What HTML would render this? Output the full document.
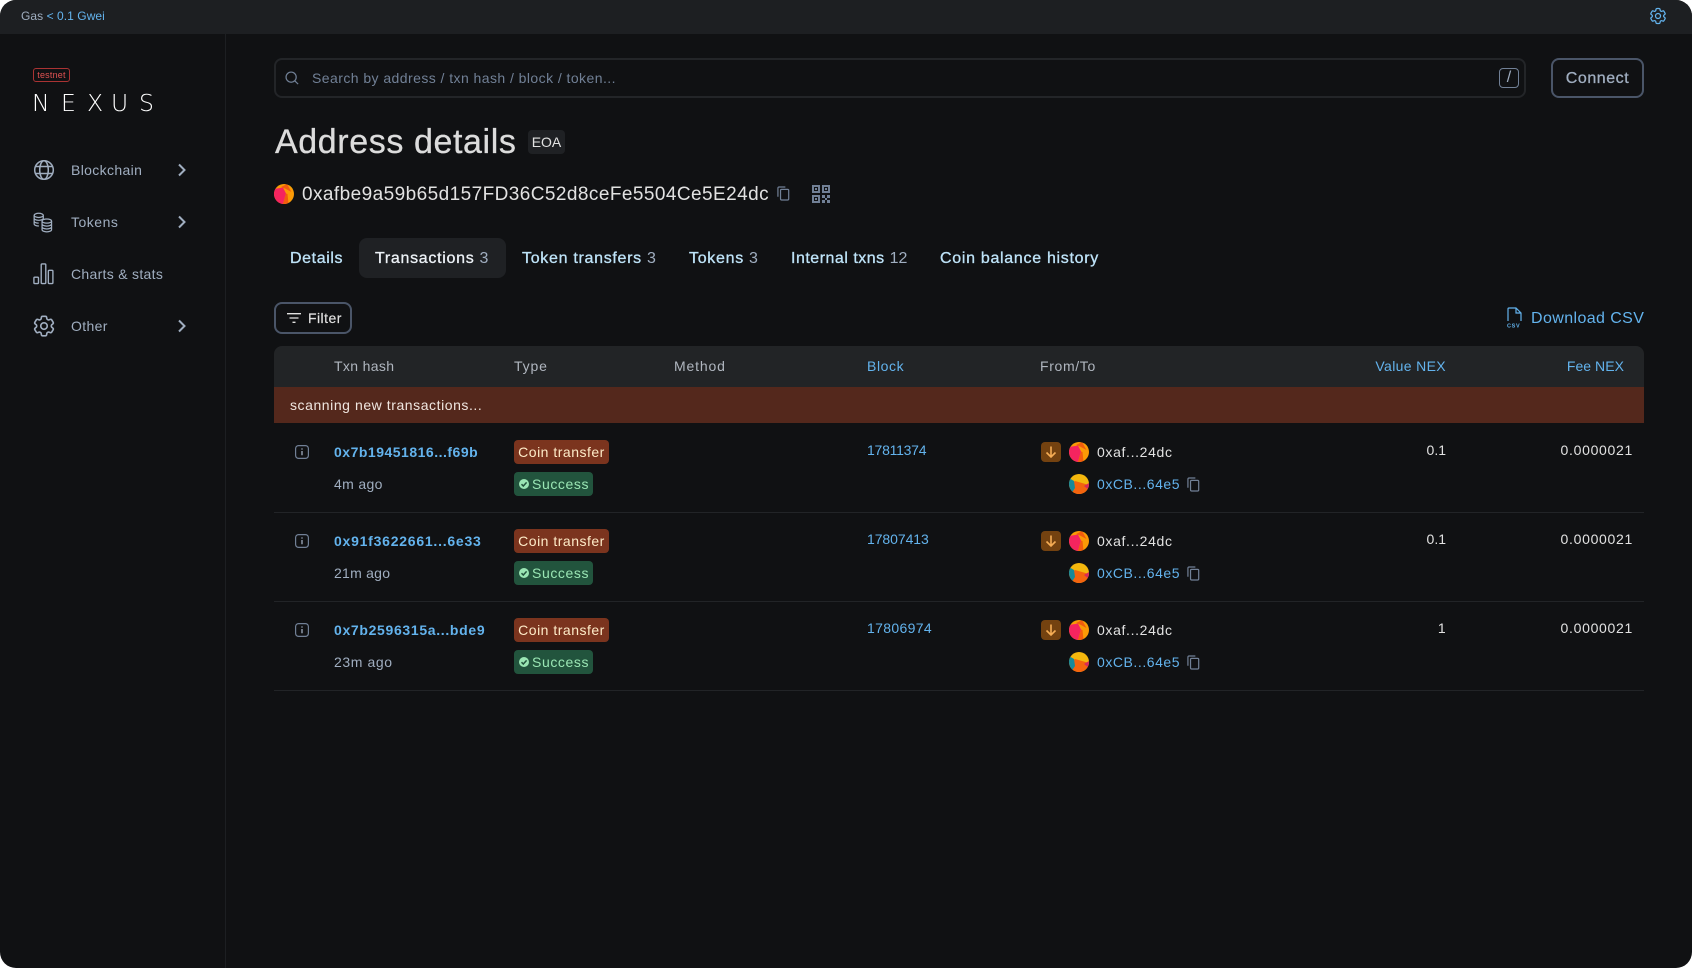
<!DOCTYPE html>
<html lang="en"><head><meta charset="utf-8"><title>Address details</title>
<style>
html,body{margin:0;padding:0;background:#fff}
body{width:1692px;height:968px;overflow:hidden;position:relative;font-family:"Liberation Sans",sans-serif}
#app{position:absolute;left:0;top:0;width:1692px;height:968px;background:#101113;border-radius:16px;overflow:hidden}
.a{position:absolute;white-space:nowrap}
.t{position:absolute;white-space:nowrap;line-height:20px;height:20px;font-size:14px;letter-spacing:.35px}
.r{text-align:right}
.m{-webkit-text-stroke:.3px currentColor}
.blue{color:#63b3ed}.grey{color:#a0aec0}.white{color:#e2e2e2}
svg{position:absolute;overflow:visible}
.badge{position:absolute;border-radius:4px;height:24px;line-height:24px;font-size:14px;letter-spacing:.35px;white-space:nowrap}
.ct{background:#7b341e;color:#feebc8;left:514px;width:95px;text-align:center;letter-spacing:.5px}
.su{background:#22543d;color:#9ae6b4;left:514px;width:79px;padding-left:18px;box-sizing:border-box;letter-spacing:.6px}
.tab{position:absolute;top:248.500px;line-height:20px;font-size:16px;letter-spacing:.7px;color:#bee3f8;white-space:nowrap;-webkit-text-stroke:.3px currentColor}
.tab span{color:#a0aec0;-webkit-text-stroke:0;letter-spacing:0}
.line{position:absolute;left:274px;width:1370px;height:1px;background:#222427}
.n{position:absolute;top:88px;font-family:"DejaVu Sans","Liberation Sans",sans-serif;font-weight:200;font-size:23.500px;line-height:30px;color:#fff}
.af{letter-spacing:.65px}.cb{letter-spacing:.55px}
.fee{letter-spacing:.7px}
.h{color:#b0b6bf}
</style></head><body>
<svg width="0" height="0" style="position:absolute"><defs>
<symbol id="gear" viewBox="0 0 24 24"><path fill="none" stroke="currentColor" stroke-width="1.5" d="M9.594 3.94c.09-.542.56-.94 1.11-.94h2.593c.55 0 1.02.398 1.11.94l.213 1.281c.063.374.313.686.645.87.074.04.147.083.22.127.324.196.72.257 1.075.124l1.217-.456a1.125 1.125 0 011.37.49l1.296 2.247a1.125 1.125 0 01-.26 1.431l-1.003.827c-.293.24-.438.613-.431.992a6.759 6.759 0 010 .255c-.007.378.138.75.43.99l1.005.828c.424.35.534.954.26 1.43l-1.298 2.247a1.125 1.125 0 01-1.369.491l-1.217-.456c-.355-.133-.75-.072-1.076.124a6.57 6.57 0 01-.22.128c-.331.183-.581.495-.644.869l-.213 1.28c-.09.543-.56.941-1.11.941h-2.594c-.55 0-1.02-.398-1.11-.94l-.213-1.281c-.062-.374-.312-.686-.644-.87a6.52 6.52 0 01-.22-.127c-.325-.196-.72-.257-1.076-.124l-1.217.456a1.125 1.125 0 01-1.369-.49l-1.297-2.247a1.125 1.125 0 01.26-1.431l1.004-.827c.292-.24.437-.613.43-.992a6.932 6.932 0 010-.255c.007-.378-.138-.75-.43-.99l-1.004-.828a1.125 1.125 0 01-.26-1.43l1.297-2.247a1.125 1.125 0 011.37-.491l1.216.456c.356.133.751.072 1.076-.124.072-.044.146-.087.22-.128.332-.183.582-.495.644-.869l.214-1.281z"/><circle cx="12" cy="12" r="3" fill="none" stroke="currentColor" stroke-width="1.5"/></symbol>
<symbol id="chev" viewBox="0 0 10 14"><path d="M2 1.5 7.5 7 2 12.500" fill="none" stroke="currentColor" stroke-width="2"/></symbol>
<symbol id="copy" viewBox="0 0 14 16"><path d="M1 11.500V2.200C1 1.500 1.500 1 2.200 1H9" fill="none" stroke="currentColor" stroke-width="1.300"/><rect x="3.800" y="3.600" width="8.800" height="11.400" rx="1.200" fill="none" stroke="currentColor" stroke-width="1.300"/></symbol>
<clipPath id="cc"><circle cx="10" cy="10" r="10"/></clipPath>
<symbol id="av1" viewBox="0 0 20 20"><g clip-path="url(#cc)"><rect width="20" height="20" fill="#fb9a06"/><path d="M0 5 9 3.500 12 9.500 9 20H0Z" fill="#f5245f"/><path d="M7 3 13 0 17.500 8 11 4.500Z" fill="#f25c0e"/><path d="M12 9.500 9 20H14.500L13.500 10Z" fill="#f25c0e"/><path d="M14 0H20V6.500Z" fill="#f4c20d"/></g></symbol>
<symbol id="av2" viewBox="0 0 20 20"><g clip-path="url(#cc)"><rect width="20" height="20" fill="#f4b70d"/><path d="M0 11 6 7 20 11V20H0Z" fill="#f4640e"/><path d="M0 4 5 7 6 14 2 20H0Z" fill="#16899b"/><path d="M15 12 20 9V16Z" fill="#d62a5a"/></g></symbol>
<symbol id="info" viewBox="0 0 14 14"><rect x=".6" y=".6" width="12.800" height="12.800" rx="3" fill="none" stroke="#718096" stroke-width="1.200"/><path d="M7 6v4.200M7 3.400v1.200" stroke="#a0aec0" stroke-width="1.300"/></symbol>
<symbol id="arrow" viewBox="0 0 20 20"><rect width="20" height="20" rx="4" fill="#744210"/><path d="M10 4.500v10M5.500 10.500 10 15l4.500-4.500" fill="none" stroke="#f6ad55" stroke-width="1.600"/></symbol>
<symbol id="chk" viewBox="0 0 12 12"><circle cx="6" cy="6" r="5" fill="#9ae6b4"/><path d="M3.500 6.200 5.300 8 8.600 4.400" fill="none" stroke="#22543d" stroke-width="1.500"/></symbol>
</defs></svg>
<div id="app">
<!-- top bar -->
<div class="a" style="left:0;top:0;width:1692px;height:34px;background:#1d1f22"></div>
<div class="t" style="left:21px;top:6px;font-size:12px;letter-spacing:.06px;color:#a0aec0">Gas <span class="blue">&lt; 0.1 Gwei</span></div>
<svg style="left:1648px;top:6px;color:#63b3ed" width="20" height="20"><use href="#gear" width="20" height="20"/></svg>
<!-- sidebar -->
<div class="a" style="left:225px;top:34px;width:1px;height:934px;background:#1d1f22"></div>
<div class="a" style="left:33px;top:68px;width:37px;height:14px;box-sizing:border-box;border:1px solid #a33;border-radius:3px;color:#e05252;font-size:9px;line-height:12px;text-align:center;letter-spacing:.2px">testnet</div>
<div class="n" style="left:32px">N</div><div class="n" style="left:61px">E</div><div class="n" style="left:87px">X</div><div class="n" style="left:111px">U</div><div class="n" style="left:139px">S</div>
<svg style="left:33px;top:159px;color:#a0aec0" width="22" height="22" viewBox="0 0 22 22" fill="none" stroke="currentColor" stroke-width="1.500"><circle cx="11" cy="11" r="9.300"/><ellipse cx="11" cy="11" rx="4.300" ry="9.300"/><path d="M2.500 7.500h17M2.500 14.500h17"/></svg>
<div class="t grey" style="left:71px;top:160px">Blockchain</div>
<svg style="left:177px;top:163px;color:#a0aec0" width="10" height="14"><use href="#chev" width="10" height="14"/></svg>
<svg style="left:33px;top:212px;color:#a0aec0" width="20" height="21" viewBox="0 0 21 21" fill="none" stroke="currentColor" stroke-width="1.300"><ellipse cx="6" cy="3" rx="4.800" ry="2.200"/><path d="M1.200 3v9c0 1.200 2 2.200 5 2.200M1.200 6c0 1.200 2 2.200 4.800 2.200S10.800 7.200 10.800 6V3M1.200 9c0 1.200 2 2.200 4.800 2.200"/><ellipse cx="14.500" cy="9" rx="5" ry="2.200"/><path d="M9.500 9v9c0 1.300 2.200 2.300 5 2.300s5-1 5-2.300V9M9.500 12c0 1.300 2.200 2.300 5 2.300s5-1 5-2.300M9.500 15c0 1.300 2.200 2.300 5 2.300s5-1 5-2.300"/></svg>
<div class="t grey" style="left:71px;top:212px;letter-spacing:.5px">Tokens</div>
<svg style="left:177px;top:215px;color:#a0aec0" width="10" height="14"><use href="#chev" width="10" height="14"/></svg>
<svg style="left:33px;top:262px;color:#a0aec0" width="21" height="23" viewBox="0 0 23 23" fill="none" stroke="currentColor" stroke-width="1.500"><rect x="1" y="15.500" width="5" height="7" rx="1"/><rect x="9" y="1" width="5" height="21.500" rx="1"/><rect x="16.800" y="8" width="5" height="14.500" rx="1"/></svg>
<div class="t grey" style="left:71px;top:264px;letter-spacing:.3px">Charts &amp; stats</div>
<svg style="left:31px;top:313px;color:#a0aec0" width="26" height="26"><use href="#gear" width="26" height="26"/></svg>
<div class="t grey" style="left:71px;top:316px">Other</div>
<svg style="left:177px;top:319px;color:#a0aec0" width="10" height="14"><use href="#chev" width="10" height="14"/></svg>
<!-- search -->
<div class="a" style="left:274px;top:58px;width:1252px;height:40px;box-sizing:border-box;border:2px solid #232528;border-radius:8px"></div>
<svg style="left:285px;top:71px" width="14" height="14" viewBox="0 0 16 16" fill="none" stroke="#718096" stroke-width="1.400"><circle cx="7" cy="7" r="5.800"/><path d="M11.300 11.300 15 15"/></svg>
<div class="t" style="left:312px;top:68px;color:#718096;letter-spacing:.44px">Search by address / txn hash / block / token...</div>
<div class="a" style="left:1499px;top:68px;width:20px;height:20px;box-sizing:border-box;border:1px solid #718096;border-radius:4px;color:#a0aec0;font-size:16px;line-height:18px;text-align:center">/</div>
<div class="a" style="left:1551px;top:58px;width:93px;height:40px;box-sizing:border-box;border:2px solid #4a5568;border-radius:8px;color:#a0aec0;font-size:16px;line-height:38px;text-align:center;letter-spacing:.55px;-webkit-text-stroke:.3px #a0aec0">Connect</div>
<!-- heading -->
<div class="a" style="left:275px;top:123px;font-size:34px;line-height:38px;color:#dcdcdc;letter-spacing:.6px;-webkit-text-stroke:.3px currentColor">Address details</div>
<div class="a" style="left:528px;top:130px;width:37px;height:24px;background:#1f2124;border-radius:4px;color:#e2e2e2;font-size:14px;line-height:24px;text-align:center">EOA</div>
<svg style="left:274px;top:184px" width="20" height="20"><use href="#av1" width="20" height="20"/></svg>
<div class="a" style="left:302px;top:184px;font-size:19px;line-height:22px;color:#e2e2e2;letter-spacing:.43px">0xafbe9a59b65d157FD36C52d8ceFe5504Ce5E24dc</div>
<svg style="left:777px;top:186px;color:#718096" width="13" height="15"><use href="#copy" width="13" height="15"/></svg>
<svg style="left:812px;top:185px" width="18" height="18" viewBox="0 0 18 18" fill="#718096"><path fill-rule="evenodd" d="M0 0h8v8H0zM2 2v4h4V2zM10 0h8v8h-8zM12 2v4h4V2zM0 10h8v8H0zM2 12v4h4v-4z"/><rect x="3" y="3" width="2" height="2"/><rect x="13" y="3" width="2" height="2"/><rect x="3" y="13" width="2" height="2"/><path d="M10 10h3v3h-3zM15 10h3v3h-3zM13 13h2v2h-2zM10 15h3v3h-3zM15 15h3v3h-3z"/></svg>
<!-- tabs -->
<div class="a" style="left:359px;top:238px;width:147px;height:40px;background:#1f2124;border-radius:8px"></div>
<div class="tab" style="left:290px;letter-spacing:.6px">Details</div>
<div class="tab" style="left:375px;color:#edf2f7">Transactions <span>3</span></div>
<div class="tab" style="left:522px">Token transfers <span>3</span></div>
<div class="tab" style="left:689px">Tokens <span>3</span></div>
<div class="tab" style="left:791px;letter-spacing:.5px">Internal txns <span>12</span></div>
<div class="tab" style="left:940px">Coin balance history</div>
<!-- toolbar -->
<div class="a" style="left:274px;top:302px;width:78px;height:32px;box-sizing:border-box;border:2px solid #4a5568;border-radius:8px"></div>
<svg style="left:287px;top:313px" width="14" height="10" viewBox="0 0 14 10" fill="none" stroke="#e2e2e2" stroke-width="1.300"><path d="M0 .7h14M2.500 5h9M5.500 9.300h3"/></svg>
<div class="t m" style="left:308px;top:308px;color:#e2e2e2;letter-spacing:.45px;-webkit-text-stroke:.15px currentColor">Filter</div>
<svg style="left:1507px;top:307px" width="15" height="21" viewBox="0 0 15 21" fill="none" stroke="#63b3ed" stroke-width="1.200"><path d="M1 14V2c0-.6.4-1 1-1h7l5 5v8M9 1v5h5"/><text x="0" y="20.500" font-size="5.500" font-weight="700" fill="#63b3ed" stroke="none" letter-spacing=".7" font-family="Liberation Sans">CSV</text></svg>
<div class="t blue" style="left:1531px;top:309px;font-size:16px;letter-spacing:.4px">Download CSV</div>
<!-- table -->
<div class="a" style="left:274px;top:346px;width:1370px;height:41px;background:#222426;border-radius:8px 8px 0 0"></div>
<div class="a" style="left:274px;top:387px;width:1370px;height:36px;background:#54281c"></div>
<div class="t h" style="left:334px;top:356px">Txn hash</div>
<div class="t h" style="left:514px;top:356px;letter-spacing:.85px">Type</div>
<div class="t h" style="left:674px;top:356px;letter-spacing:.85px">Method</div>
<div class="t blue" style="left:867px;top:356px;letter-spacing:.6px">Block</div>
<div class="t h" style="left:1040px;top:356px;letter-spacing:.65px">From/To</div>
<div class="t blue r" style="right:246px;top:356px">Value NEX</div>
<div class="t blue r" style="right:68px;top:356px;letter-spacing:.05px">Fee NEX</div>
<div class="t" style="left:290px;top:395px;color:#f0e6e0;letter-spacing:.56px">scanning new transactions...</div>

<!-- row 1 -->
<svg style="left:295px;top:445px" width="14" height="14"><use href="#info" width="14" height="14"/></svg>
<div class="t blue" style="left:334px;top:442px;font-weight:700;letter-spacing:.5px">0x7b19451816...f69b</div>
<div class="t grey" style="left:334px;top:474px">4m ago</div>
<div class="badge ct" style="top:440px">Coin transfer</div>
<div class="badge su" style="top:472px">Success</div>
<svg style="left:518px;top:478px" width="12" height="12"><use href="#chk" width="12" height="12"/></svg>
<div class="t blue" style="left:867px;top:440px;letter-spacing:-.25px">17811374</div>
<svg style="left:1040.500px;top:442px" width="20" height="20"><use href="#arrow" width="20" height="20"/></svg>
<svg style="left:1068.500px;top:442px" width="20" height="20"><use href="#av1" width="20" height="20"/></svg>
<div class="t white af" style="left:1097px;top:442px">0xaf...24dc</div>
<svg style="left:1068.500px;top:474px" width="20" height="20"><use href="#av2" width="20" height="20"/></svg>
<div class="t blue cb" style="left:1097px;top:474px">0xCB...64e5</div>
<svg style="left:1187px;top:477px;color:#718096" width="13" height="15"><use href="#copy" width="13" height="15"/></svg>
<div class="t white r" style="right:246px;top:440px;letter-spacing:0">0.1</div>
<div class="t white r fee" style="right:59px;top:440px">0.0000021</div>
<div class="line" style="top:512px"></div>

<!-- row 2 -->
<svg style="left:295px;top:534px" width="14" height="14"><use href="#info" width="14" height="14"/></svg>
<div class="t blue" style="left:334px;top:531px;font-weight:700;letter-spacing:.76px">0x91f3622661...6e33</div>
<div class="t grey" style="left:334px;top:563px;letter-spacing:.25px">21m ago</div>
<div class="badge ct" style="top:529px">Coin transfer</div>
<div class="badge su" style="top:561px">Success</div>
<svg style="left:518px;top:567px" width="12" height="12"><use href="#chk" width="12" height="12"/></svg>
<div class="t blue" style="left:867px;top:529px;letter-spacing:-.07px">17807413</div>
<svg style="left:1040.500px;top:531px" width="20" height="20"><use href="#arrow" width="20" height="20"/></svg>
<svg style="left:1068.500px;top:531px" width="20" height="20"><use href="#av1" width="20" height="20"/></svg>
<div class="t white af" style="left:1097px;top:531px">0xaf...24dc</div>
<svg style="left:1068.500px;top:563px" width="20" height="20"><use href="#av2" width="20" height="20"/></svg>
<div class="t blue cb" style="left:1097px;top:563px">0xCB...64e5</div>
<svg style="left:1187px;top:566px;color:#718096" width="13" height="15"><use href="#copy" width="13" height="15"/></svg>
<div class="t white r" style="right:246px;top:529px;letter-spacing:0">0.1</div>
<div class="t white r fee" style="right:59px;top:529px">0.0000021</div>
<div class="line" style="top:601px"></div>

<!-- row 3 -->
<svg style="left:295px;top:623px" width="14" height="14"><use href="#info" width="14" height="14"/></svg>
<div class="t blue" style="left:334px;top:620px;font-weight:700;letter-spacing:.67px">0x7b2596315a...bde9</div>
<div class="t grey" style="left:334px;top:652px;letter-spacing:.6px">23m ago</div>
<div class="badge ct" style="top:618px">Coin transfer</div>
<div class="badge su" style="top:650px">Success</div>
<svg style="left:518px;top:656px" width="12" height="12"><use href="#chk" width="12" height="12"/></svg>
<div class="t blue" style="left:867px;top:618px;letter-spacing:.33px">17806974</div>
<svg style="left:1040.500px;top:620px" width="20" height="20"><use href="#arrow" width="20" height="20"/></svg>
<svg style="left:1068.500px;top:620px" width="20" height="20"><use href="#av1" width="20" height="20"/></svg>
<div class="t white af" style="left:1097px;top:620px">0xaf...24dc</div>
<svg style="left:1068.500px;top:652px" width="20" height="20"><use href="#av2" width="20" height="20"/></svg>
<div class="t blue cb" style="left:1097px;top:652px">0xCB...64e5</div>
<svg style="left:1187px;top:655px;color:#718096" width="13" height="15"><use href="#copy" width="13" height="15"/></svg>
<div class="t white r" style="right:246px;top:618px">1</div>
<div class="t white r fee" style="right:59px;top:618px">0.0000021</div>
<div class="line" style="top:690px"></div>
</div>
</body></html>
